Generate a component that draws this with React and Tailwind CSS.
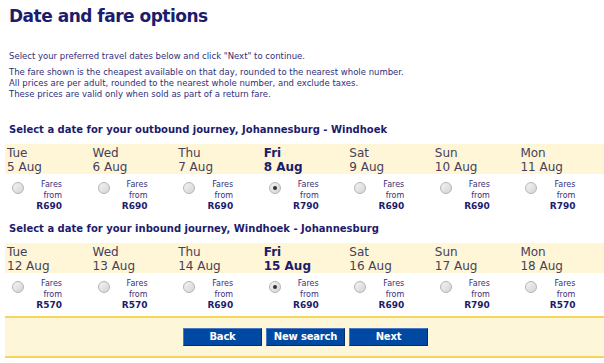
const outbound = [
  { day: "Tue", date: "5 Aug", price: "R690" },
  { day: "Wed", date: "6 Aug", price: "R690" },
  { day: "Thu", date: "7 Aug", price: "R690" },
  { day: "Fri", date: "8 Aug", price: "R790", selected: true },
  { day: "Sat", date: "9 Aug", price: "R690" },
  { day: "Sun", date: "10 Aug", price: "R690" },
  { day: "Mon", date: "11 Aug", price: "R790" },
];

const inbound = [
  { day: "Tue", date: "12 Aug", price: "R570" },
  { day: "Wed", date: "13 Aug", price: "R570" },
  { day: "Thu", date: "14 Aug", price: "R690" },
  { day: "Fri", date: "15 Aug", price: "R690", selected: true },
  { day: "Sat", date: "16 Aug", price: "R690" },
  { day: "Sun", date: "17 Aug", price: "R790" },
  { day: "Mon", date: "18 Aug", price: "R570" },
];

function Radio({ checked }) {
  return (
    <span className="mt-[3px] flex h-[12px] w-[12px] items-center justify-center rounded-full border border-[#b4b4b4] bg-gradient-to-br from-[#f4f4f4] to-[#d4d4d4]">
      {checked && <span className="h-[4px] w-[4px] rounded-full bg-[#333]" />}
    </span>
  );
}

function DateTable({ days }) {
  return (
    <div className="ml-[5px]">
      <div className="grid h-[30px] grid-cols-7 bg-[#fef6d6]">
        {days.map((d) => (
          <div
            key={d.date}
            className={`pl-[2px] pt-[2px] text-[12px] leading-[14px] ${
              d.selected ? "font-bold text-[#1c1c6c]" : "text-[#47405a]"
            }`}
          >
            <div>{d.day}</div>
            <div>{d.date}</div>
          </div>
        ))}
      </div>
      <div className="grid h-[40px] grid-cols-7">
        {days.map((d) => (
          <div key={d.date} className="flex pt-[5px]">
            <div className="ml-[7px] w-[12px]">
              <Radio checked={d.selected} />
            </div>
            <div className="w-[38px] text-right text-[8px] leading-[11px] text-[#3a2f7a]">
              <div>Fares</div>
              <div>from</div>
              <div className="text-[9px] font-bold text-[#1c1c6c]">{d.price}</div>
            </div>
          </div>
        ))}
      </div>
    </div>
  );
}

export default function App() {
  return (
    <div className="h-[363px] w-[604px] overflow-hidden bg-white font-['DejaVu_Sans',sans-serif] text-[#2f2f7a]">
      <h1 className="pl-[9px] pt-[5px] text-[17px] font-bold leading-[22px] tracking-[-0.5px] text-[#1c1c6c]">
        Date and fare options
      </h1>
      <div className="mt-[24px] pl-[9px] text-[8.5px] leading-[11px]">
        <p>Select your preferred travel dates below and click "Next" to continue.</p>
        <p className="mt-[5px]">
          The fare shown is the cheapest available on that day, rounded to the nearest whole number.
        </p>
        <p>All prices are per adult, rounded to the nearest whole number, and exclude taxes.</p>
        <p>These prices are valid only when sold as part of a return fare.</p>
      </div>
      <h2 className="mt-[23px] pl-[9px] text-[10px] font-bold leading-[14px] text-[#1c1c6c]">
        Select a date for your outbound journey, Johannesburg - Windhoek
      </h2>
      <div className="mt-[7px]">
        <DateTable days={outbound} />
      </div>
      <h2 className="mt-[8px] pl-[9px] text-[10px] font-bold leading-[14px] text-[#1c1c6c]">
        Select a date for your inbound journey, Windhoek - Johannesburg
      </h2>
      <div className="mt-[7px]">
        <DateTable days={inbound} />
      </div>
      <div className="ml-[5px] mt-[3px] flex h-[42px] items-center justify-center gap-[4px] border-y-2 border-[#f5d55a] bg-[#fef6d9] pl-[2px]">
        {["Back", "New search", "Next"].map((b) => (
          <button
            key={b}
            className="h-[18px] w-[79px] border border-b-[#0a2a6a] border-l-[#4a78c0] border-r-[#0a2a6a] border-t-[#4a78c0] bg-[#0049a3] text-[10px] font-bold leading-[16px] tracking-[-0.2px] text-white"
          >
            {b}
          </button>
        ))}
      </div>
    </div>
  );
}
